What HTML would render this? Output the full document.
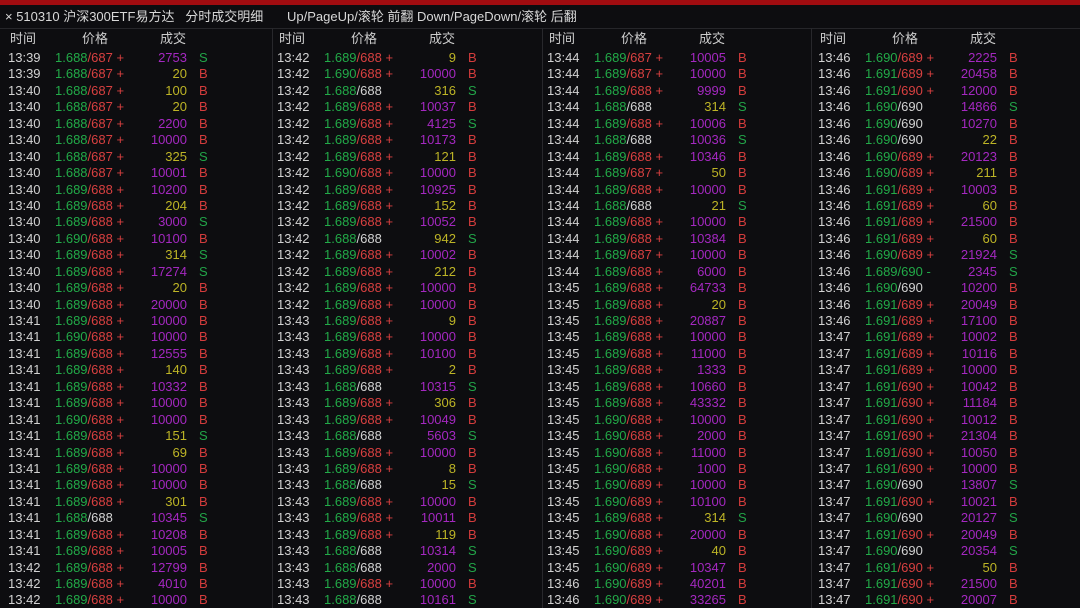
<!DOCTYPE html>
<html><head><meta charset="utf-8"><style>
*{margin:0;padding:0;box-sizing:border-box}
html,body{width:1080px;height:608px;overflow:hidden;background:#0d0d10;font-family:"Liberation Sans","Noto Sans CJK SC",sans-serif;color:#d4d4d4}
#bar{position:absolute;left:0;top:0;width:1080px;height:5px;background:#a00c10}
#ttl{position:absolute;left:5px;top:8px;font-size:13px;line-height:18px;color:#d8d8d8;white-space:pre}
#ttl2{position:absolute;left:287px;top:8px;font-size:13px;line-height:18px;color:#d8d8d8;white-space:pre}
#hl{position:absolute;left:0;top:28px;width:1080px;height:1px;background:#26262a}
.sep{position:absolute;top:28px;width:1px;height:580px;background:#28282c}
.col{position:absolute;top:29px;width:265px}
.hd{position:relative;height:20px;font-size:13px;line-height:19px;color:#cccccc}
.hd span{position:absolute;top:0}
.r{position:relative;height:16.45px;line-height:17px;font-size:13px;white-space:pre}
.r i{position:absolute;left:0;font-style:normal;color:#d2d2d2}
.r b{position:absolute;left:47px;font-weight:normal;color:#22aa48}
.r b em{font-style:normal;color:#d84040}
.r b em.w{color:#d2d2d2}
.r b em.g{color:#22aa48}
.r s{position:absolute;right:86px;text-decoration:none;color:#a428c0;text-align:right}
.r s.y{color:#bdb426}
.r u{position:absolute;left:191px;text-decoration:none;color:#d43c3c}
.r u.S{color:#22a448}
</style></head><body>
<div id="bar"></div>
<div id="ttl">× 510310 沪深300ETF易方达   分时成交明细</div>
<div id="ttl2">Up/PageUp/滚轮 前翻 Down/PageDown/滚轮 后翻</div>
<div id="hl"></div>
<div class="sep" style="left:272px"></div>
<div class="sep" style="left:542px"></div>
<div class="sep" style="left:811px"></div>

<div class="col" style="left:8px">
<div class="hd"><span style="left:2px">时间</span><span style="left:74px">价格</span><span style="left:152px">成交</span></div>
<div class="r"><i>13:39</i><b>1.688<em>/687 +</em></b><s>2753</s><u class="S">S</u></div>
<div class="r"><i>13:39</i><b>1.688<em>/687 +</em></b><s class="y">20</s><u>B</u></div>
<div class="r"><i>13:40</i><b>1.688<em>/687 +</em></b><s class="y">100</s><u>B</u></div>
<div class="r"><i>13:40</i><b>1.688<em>/687 +</em></b><s class="y">20</s><u>B</u></div>
<div class="r"><i>13:40</i><b>1.688<em>/687 +</em></b><s>2200</s><u>B</u></div>
<div class="r"><i>13:40</i><b>1.688<em>/687 +</em></b><s>10000</s><u>B</u></div>
<div class="r"><i>13:40</i><b>1.688<em>/687 +</em></b><s class="y">325</s><u class="S">S</u></div>
<div class="r"><i>13:40</i><b>1.688<em>/687 +</em></b><s>10001</s><u>B</u></div>
<div class="r"><i>13:40</i><b>1.689<em>/688 +</em></b><s>10200</s><u>B</u></div>
<div class="r"><i>13:40</i><b>1.689<em>/688 +</em></b><s class="y">204</s><u>B</u></div>
<div class="r"><i>13:40</i><b>1.689<em>/688 +</em></b><s>3000</s><u class="S">S</u></div>
<div class="r"><i>13:40</i><b>1.690<em>/688 +</em></b><s>10100</s><u>B</u></div>
<div class="r"><i>13:40</i><b>1.689<em>/688 +</em></b><s class="y">314</s><u class="S">S</u></div>
<div class="r"><i>13:40</i><b>1.689<em>/688 +</em></b><s>17274</s><u class="S">S</u></div>
<div class="r"><i>13:40</i><b>1.689<em>/688 +</em></b><s class="y">20</s><u>B</u></div>
<div class="r"><i>13:40</i><b>1.689<em>/688 +</em></b><s>20000</s><u>B</u></div>
<div class="r"><i>13:41</i><b>1.689<em>/688 +</em></b><s>10000</s><u>B</u></div>
<div class="r"><i>13:41</i><b>1.690<em>/688 +</em></b><s>10000</s><u>B</u></div>
<div class="r"><i>13:41</i><b>1.689<em>/688 +</em></b><s>12555</s><u>B</u></div>
<div class="r"><i>13:41</i><b>1.689<em>/688 +</em></b><s class="y">140</s><u>B</u></div>
<div class="r"><i>13:41</i><b>1.689<em>/688 +</em></b><s>10332</s><u>B</u></div>
<div class="r"><i>13:41</i><b>1.689<em>/688 +</em></b><s>10000</s><u>B</u></div>
<div class="r"><i>13:41</i><b>1.690<em>/688 +</em></b><s>10000</s><u>B</u></div>
<div class="r"><i>13:41</i><b>1.689<em>/688 +</em></b><s class="y">151</s><u class="S">S</u></div>
<div class="r"><i>13:41</i><b>1.689<em>/688 +</em></b><s class="y">69</s><u>B</u></div>
<div class="r"><i>13:41</i><b>1.689<em>/688 +</em></b><s>10000</s><u>B</u></div>
<div class="r"><i>13:41</i><b>1.689<em>/688 +</em></b><s>10000</s><u>B</u></div>
<div class="r"><i>13:41</i><b>1.689<em>/688 +</em></b><s class="y">301</s><u>B</u></div>
<div class="r"><i>13:41</i><b>1.688<em class="w">/688</em></b><s>10345</s><u class="S">S</u></div>
<div class="r"><i>13:41</i><b>1.689<em>/688 +</em></b><s>10208</s><u>B</u></div>
<div class="r"><i>13:41</i><b>1.689<em>/688 +</em></b><s>10005</s><u>B</u></div>
<div class="r"><i>13:42</i><b>1.689<em>/688 +</em></b><s>12799</s><u>B</u></div>
<div class="r"><i>13:42</i><b>1.689<em>/688 +</em></b><s>4010</s><u>B</u></div>
<div class="r"><i>13:42</i><b>1.689<em>/688 +</em></b><s>10000</s><u>B</u></div>
</div>

<div class="col" style="left:277px">
<div class="hd"><span style="left:2px">时间</span><span style="left:74px">价格</span><span style="left:152px">成交</span></div>
<div class="r"><i>13:42</i><b>1.689<em>/688 +</em></b><s class="y">9</s><u>B</u></div>
<div class="r"><i>13:42</i><b>1.690<em>/688 +</em></b><s>10000</s><u>B</u></div>
<div class="r"><i>13:42</i><b>1.688<em class="w">/688</em></b><s class="y">316</s><u class="S">S</u></div>
<div class="r"><i>13:42</i><b>1.689<em>/688 +</em></b><s>10037</s><u>B</u></div>
<div class="r"><i>13:42</i><b>1.689<em>/688 +</em></b><s>4125</s><u class="S">S</u></div>
<div class="r"><i>13:42</i><b>1.689<em>/688 +</em></b><s>10173</s><u>B</u></div>
<div class="r"><i>13:42</i><b>1.689<em>/688 +</em></b><s class="y">121</s><u>B</u></div>
<div class="r"><i>13:42</i><b>1.690<em>/688 +</em></b><s>10000</s><u>B</u></div>
<div class="r"><i>13:42</i><b>1.689<em>/688 +</em></b><s>10925</s><u>B</u></div>
<div class="r"><i>13:42</i><b>1.689<em>/688 +</em></b><s class="y">152</s><u>B</u></div>
<div class="r"><i>13:42</i><b>1.689<em>/688 +</em></b><s>10052</s><u>B</u></div>
<div class="r"><i>13:42</i><b>1.688<em class="w">/688</em></b><s class="y">942</s><u class="S">S</u></div>
<div class="r"><i>13:42</i><b>1.689<em>/688 +</em></b><s>10002</s><u>B</u></div>
<div class="r"><i>13:42</i><b>1.689<em>/688 +</em></b><s class="y">212</s><u>B</u></div>
<div class="r"><i>13:42</i><b>1.689<em>/688 +</em></b><s>10000</s><u>B</u></div>
<div class="r"><i>13:42</i><b>1.689<em>/688 +</em></b><s>10000</s><u>B</u></div>
<div class="r"><i>13:43</i><b>1.689<em>/688 +</em></b><s class="y">9</s><u>B</u></div>
<div class="r"><i>13:43</i><b>1.689<em>/688 +</em></b><s>10000</s><u>B</u></div>
<div class="r"><i>13:43</i><b>1.689<em>/688 +</em></b><s>10100</s><u>B</u></div>
<div class="r"><i>13:43</i><b>1.689<em>/688 +</em></b><s class="y">2</s><u>B</u></div>
<div class="r"><i>13:43</i><b>1.688<em class="w">/688</em></b><s>10315</s><u class="S">S</u></div>
<div class="r"><i>13:43</i><b>1.689<em>/688 +</em></b><s class="y">306</s><u>B</u></div>
<div class="r"><i>13:43</i><b>1.689<em>/688 +</em></b><s>10049</s><u>B</u></div>
<div class="r"><i>13:43</i><b>1.688<em class="w">/688</em></b><s>5603</s><u class="S">S</u></div>
<div class="r"><i>13:43</i><b>1.689<em>/688 +</em></b><s>10000</s><u>B</u></div>
<div class="r"><i>13:43</i><b>1.689<em>/688 +</em></b><s class="y">8</s><u>B</u></div>
<div class="r"><i>13:43</i><b>1.688<em class="w">/688</em></b><s class="y">15</s><u class="S">S</u></div>
<div class="r"><i>13:43</i><b>1.689<em>/688 +</em></b><s>10000</s><u>B</u></div>
<div class="r"><i>13:43</i><b>1.689<em>/688 +</em></b><s>10011</s><u>B</u></div>
<div class="r"><i>13:43</i><b>1.689<em>/688 +</em></b><s class="y">119</s><u>B</u></div>
<div class="r"><i>13:43</i><b>1.688<em class="w">/688</em></b><s>10314</s><u class="S">S</u></div>
<div class="r"><i>13:43</i><b>1.688<em class="w">/688</em></b><s>2000</s><u class="S">S</u></div>
<div class="r"><i>13:43</i><b>1.689<em>/688 +</em></b><s>10000</s><u>B</u></div>
<div class="r"><i>13:43</i><b>1.688<em class="w">/688</em></b><s>10161</s><u class="S">S</u></div>
</div>

<div class="col" style="left:547px">
<div class="hd"><span style="left:2px">时间</span><span style="left:74px">价格</span><span style="left:152px">成交</span></div>
<div class="r"><i>13:44</i><b>1.689<em>/687 +</em></b><s>10005</s><u>B</u></div>
<div class="r"><i>13:44</i><b>1.689<em>/687 +</em></b><s>10000</s><u>B</u></div>
<div class="r"><i>13:44</i><b>1.689<em>/688 +</em></b><s>9999</s><u>B</u></div>
<div class="r"><i>13:44</i><b>1.688<em class="w">/688</em></b><s class="y">314</s><u class="S">S</u></div>
<div class="r"><i>13:44</i><b>1.689<em>/688 +</em></b><s>10006</s><u>B</u></div>
<div class="r"><i>13:44</i><b>1.688<em class="w">/688</em></b><s>10036</s><u class="S">S</u></div>
<div class="r"><i>13:44</i><b>1.689<em>/688 +</em></b><s>10346</s><u>B</u></div>
<div class="r"><i>13:44</i><b>1.689<em>/687 +</em></b><s class="y">50</s><u>B</u></div>
<div class="r"><i>13:44</i><b>1.689<em>/688 +</em></b><s>10000</s><u>B</u></div>
<div class="r"><i>13:44</i><b>1.688<em class="w">/688</em></b><s class="y">21</s><u class="S">S</u></div>
<div class="r"><i>13:44</i><b>1.689<em>/688 +</em></b><s>10000</s><u>B</u></div>
<div class="r"><i>13:44</i><b>1.689<em>/688 +</em></b><s>10384</s><u>B</u></div>
<div class="r"><i>13:44</i><b>1.689<em>/687 +</em></b><s>10000</s><u>B</u></div>
<div class="r"><i>13:44</i><b>1.689<em>/688 +</em></b><s>6000</s><u>B</u></div>
<div class="r"><i>13:45</i><b>1.689<em>/688 +</em></b><s>64733</s><u>B</u></div>
<div class="r"><i>13:45</i><b>1.689<em>/688 +</em></b><s class="y">20</s><u>B</u></div>
<div class="r"><i>13:45</i><b>1.689<em>/688 +</em></b><s>20887</s><u>B</u></div>
<div class="r"><i>13:45</i><b>1.689<em>/688 +</em></b><s>10000</s><u>B</u></div>
<div class="r"><i>13:45</i><b>1.689<em>/688 +</em></b><s>11000</s><u>B</u></div>
<div class="r"><i>13:45</i><b>1.689<em>/688 +</em></b><s>1333</s><u>B</u></div>
<div class="r"><i>13:45</i><b>1.689<em>/688 +</em></b><s>10660</s><u>B</u></div>
<div class="r"><i>13:45</i><b>1.689<em>/688 +</em></b><s>43332</s><u>B</u></div>
<div class="r"><i>13:45</i><b>1.690<em>/688 +</em></b><s>10000</s><u>B</u></div>
<div class="r"><i>13:45</i><b>1.690<em>/688 +</em></b><s>2000</s><u>B</u></div>
<div class="r"><i>13:45</i><b>1.690<em>/688 +</em></b><s>11000</s><u>B</u></div>
<div class="r"><i>13:45</i><b>1.690<em>/688 +</em></b><s>1000</s><u>B</u></div>
<div class="r"><i>13:45</i><b>1.690<em>/689 +</em></b><s>10000</s><u>B</u></div>
<div class="r"><i>13:45</i><b>1.690<em>/689 +</em></b><s>10100</s><u>B</u></div>
<div class="r"><i>13:45</i><b>1.689<em>/688 +</em></b><s class="y">314</s><u class="S">S</u></div>
<div class="r"><i>13:45</i><b>1.690<em>/688 +</em></b><s>20000</s><u>B</u></div>
<div class="r"><i>13:45</i><b>1.690<em>/689 +</em></b><s class="y">40</s><u>B</u></div>
<div class="r"><i>13:45</i><b>1.690<em>/689 +</em></b><s>10347</s><u>B</u></div>
<div class="r"><i>13:46</i><b>1.690<em>/689 +</em></b><s>40201</s><u>B</u></div>
<div class="r"><i>13:46</i><b>1.690<em>/689 +</em></b><s>33265</s><u>B</u></div>
</div>

<div class="col" style="left:818px">
<div class="hd"><span style="left:2px">时间</span><span style="left:74px">价格</span><span style="left:152px">成交</span></div>
<div class="r"><i>13:46</i><b>1.690<em>/689 +</em></b><s>2225</s><u>B</u></div>
<div class="r"><i>13:46</i><b>1.691<em>/689 +</em></b><s>20458</s><u>B</u></div>
<div class="r"><i>13:46</i><b>1.691<em>/690 +</em></b><s>12000</s><u>B</u></div>
<div class="r"><i>13:46</i><b>1.690<em class="w">/690</em></b><s>14866</s><u class="S">S</u></div>
<div class="r"><i>13:46</i><b>1.690<em class="w">/690</em></b><s>10270</s><u>B</u></div>
<div class="r"><i>13:46</i><b>1.690<em class="w">/690</em></b><s class="y">22</s><u>B</u></div>
<div class="r"><i>13:46</i><b>1.690<em>/689 +</em></b><s>20123</s><u>B</u></div>
<div class="r"><i>13:46</i><b>1.690<em>/689 +</em></b><s class="y">211</s><u>B</u></div>
<div class="r"><i>13:46</i><b>1.691<em>/689 +</em></b><s>10003</s><u>B</u></div>
<div class="r"><i>13:46</i><b>1.691<em>/689 +</em></b><s class="y">60</s><u>B</u></div>
<div class="r"><i>13:46</i><b>1.691<em>/689 +</em></b><s>21500</s><u>B</u></div>
<div class="r"><i>13:46</i><b>1.691<em>/689 +</em></b><s class="y">60</s><u>B</u></div>
<div class="r"><i>13:46</i><b>1.690<em>/689 +</em></b><s>21924</s><u class="S">S</u></div>
<div class="r"><i>13:46</i><b>1.689<em class="g">/690 -</em></b><s>2345</s><u class="S">S</u></div>
<div class="r"><i>13:46</i><b>1.690<em class="w">/690</em></b><s>10200</s><u>B</u></div>
<div class="r"><i>13:46</i><b>1.691<em>/689 +</em></b><s>20049</s><u>B</u></div>
<div class="r"><i>13:46</i><b>1.691<em>/689 +</em></b><s>17100</s><u>B</u></div>
<div class="r"><i>13:47</i><b>1.691<em>/689 +</em></b><s>10002</s><u>B</u></div>
<div class="r"><i>13:47</i><b>1.691<em>/689 +</em></b><s>10116</s><u>B</u></div>
<div class="r"><i>13:47</i><b>1.691<em>/689 +</em></b><s>10000</s><u>B</u></div>
<div class="r"><i>13:47</i><b>1.691<em>/690 +</em></b><s>10042</s><u>B</u></div>
<div class="r"><i>13:47</i><b>1.691<em>/690 +</em></b><s>11184</s><u>B</u></div>
<div class="r"><i>13:47</i><b>1.691<em>/690 +</em></b><s>10012</s><u>B</u></div>
<div class="r"><i>13:47</i><b>1.691<em>/690 +</em></b><s>21304</s><u>B</u></div>
<div class="r"><i>13:47</i><b>1.691<em>/690 +</em></b><s>10050</s><u>B</u></div>
<div class="r"><i>13:47</i><b>1.691<em>/690 +</em></b><s>10000</s><u>B</u></div>
<div class="r"><i>13:47</i><b>1.690<em class="w">/690</em></b><s>13807</s><u class="S">S</u></div>
<div class="r"><i>13:47</i><b>1.691<em>/690 +</em></b><s>10021</s><u>B</u></div>
<div class="r"><i>13:47</i><b>1.690<em class="w">/690</em></b><s>20127</s><u class="S">S</u></div>
<div class="r"><i>13:47</i><b>1.691<em>/690 +</em></b><s>20049</s><u>B</u></div>
<div class="r"><i>13:47</i><b>1.690<em class="w">/690</em></b><s>20354</s><u class="S">S</u></div>
<div class="r"><i>13:47</i><b>1.691<em>/690 +</em></b><s class="y">50</s><u>B</u></div>
<div class="r"><i>13:47</i><b>1.691<em>/690 +</em></b><s>21500</s><u>B</u></div>
<div class="r"><i>13:47</i><b>1.691<em>/690 +</em></b><s>20007</s><u>B</u></div>
</div>
</body></html>
